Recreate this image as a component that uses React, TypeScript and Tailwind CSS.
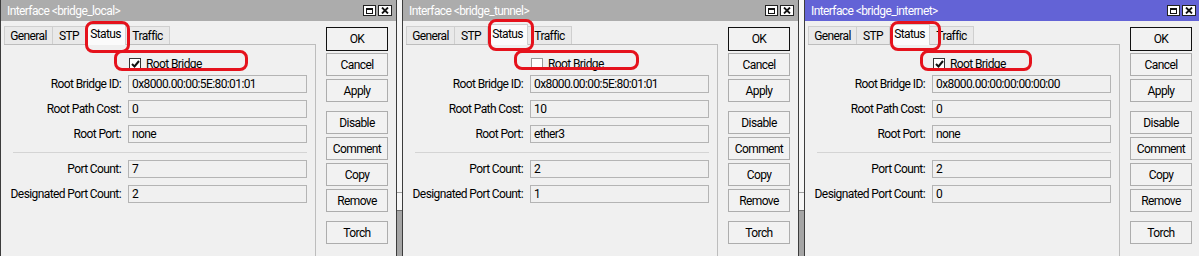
import React from 'react';

type Win = {
  name: string;
  active: boolean;
  rootBridge: boolean;
  rootId: string;
  pathCost: string;
  rootPort: string;
  portCount: string;
  designated: string;
  statusMark: string;
  bridgeMark: string;
};

const windows: Win[] = [
  {
    name: 'bridge_local',
    active: false,
    rootBridge: true,
    rootId: '0x8000.00:00:5E:80:01:01',
    pathCost: '0',
    rootPort: 'none',
    portCount: '7',
    designated: '2',
    statusMark: 'left-[84px] top-[21px] w-[45px] h-[32px]',
    bridgeMark: 'left-[113px] top-[50px] w-[134px] h-[21px]',
  },
  {
    name: 'bridge_tunnel',
    active: false,
    rootBridge: false,
    rootId: '0x8000.00:00:5E:80:01:01',
    pathCost: '10',
    rootPort: 'ether3',
    portCount: '2',
    designated: '1',
    statusMark: 'left-[85px] top-[19px] w-[46px] h-[32px]',
    bridgeMark: 'left-[111px] top-[50px] w-[125px] h-[20px]',
  },
  {
    name: 'bridge_internet',
    active: true,
    rootBridge: true,
    rootId: '0x8000.00:00:00:00:00:00',
    pathCost: '0',
    rootPort: 'none',
    portCount: '2',
    designated: '0',
    statusMark: 'left-[85px] top-[21px] w-[51px] h-[30px]',
    bridgeMark: 'left-[115px] top-[50px] w-[112px] h-[21px]',
  },
];

const Field = ({ label, value }: { label: string; value: string }) => (
  <div className="flex items-center h-[18px]">
    <div className="w-[117px] text-right whitespace-nowrap">{label}</div>
    <div className="ml-[7px] w-[179px] h-[18px] border border-[#b4b4b4] bg-[#f0f0f0] pl-[3px] leading-[16px]">
      {value}
    </div>
  </div>
);

const Btn = ({ label, cls }: { label: string; cls: string }) => (
  <div className={`h-[23px] flex items-center justify-center border border-[#adadad] bg-[#f2f2f2] ${cls}`}>
    {label}
  </div>
);

const Window = ({ w }: { w: Win }) => (
  <div className="relative w-[397px] h-[256px] shrink-0 flex flex-col border-x border-[#3c3c3c] bg-[#f0f0f0]">
    {/* title bar */}
    <div className={`h-[21px] flex items-center pl-[6px] pr-[4px] text-white ${w.active ? 'bg-[#6363d6]' : 'bg-[#acacac]'}`}>
      <span>Interface &lt;{w.name}&gt;</span>
      <div className="ml-auto flex gap-[2px]">
        <div className="w-[13px] h-[11px] bg-white border border-[#222] flex items-center justify-center">
          <div className="w-[7px] h-[6px] border border-[#111] border-t-2" />
        </div>
        <div className="w-[14px] h-[11px] bg-white border border-[#222] flex items-center justify-center">
          <svg width="8" height="7" viewBox="0 0 8 7">
            <path d="M1 0.5 L7 6.5 M7 0.5 L1 6.5" stroke="#111" strokeWidth="1.8" />
          </svg>
        </div>
      </div>
    </div>

    <div className="flex flex-1">
      {/* tabs + panel */}
      <div className="flex flex-col pl-[3px]">
        <div className="h-[23px] flex items-end">
          <div className="w-[49px] h-[18px] border border-b-0 border-[#cfcfcf] bg-[#e9e9e9] flex items-center justify-center">General</div>
          <div className="w-[33px] h-[18px] border border-b-0 border-l-0 border-[#cfcfcf] bg-[#e9e9e9] flex items-center justify-center">STP</div>
          <div className="w-[40px] h-[21px] -mb-px border border-b-0 border-l-0 border-[#cfcfcf] bg-[#fbfbfb] flex items-start justify-center pt-[3px] z-10">Status</div>
          <div className="w-[44px] h-[18px] border border-b-0 border-l-0 border-[#cfcfcf] bg-[#e9e9e9] flex items-center justify-center">Traffic</div>
        </div>
        <div className="w-[312px] flex-1 border-t border-r border-[#bdbdbd] pt-[12px]">
          <div className="h-[13px] flex items-center pl-[125px]">
            <div className={`w-[12px] h-[12px] border bg-white flex items-center justify-center ${w.rootBridge ? 'border-[#333]' : 'border-[#9a9a9a]'}`}>
              {w.rootBridge && (
                <svg width="9" height="8" viewBox="0 0 9 8">
                  <path d="M1 4 L3.5 6.5 L8 1" stroke="#111" strokeWidth="2" fill="none" />
                </svg>
              )}
            </div>
            <span className="ml-[5px]">Root Bridge</span>
          </div>
          <div className="mt-[5px] flex flex-col gap-[7px]">
            <Field label="Root Bridge ID:" value={w.rootId} />
            <Field label="Root Path Cost:" value={w.pathCost} />
            <Field label="Root Port:" value={w.rootPort} />
          </div>
          <div className="mt-[9px] ml-[9px] w-[294px] h-px bg-[#d4d4d4]" />
          <div className="mt-[7px] flex flex-col gap-[7px]">
            <Field label="Port Count:" value={w.portCount} />
            <Field label="Designated Port Count:" value={w.designated} />
          </div>
        </div>
      </div>

      {/* buttons */}
      <div className="ml-[10px] pt-[6px] w-[62px] flex flex-col">
        <div className="h-[24px] flex items-center justify-center border border-[#111] bg-[#f2f2f2]">OK</div>
        <Btn label="Cancel" cls="mt-[2px]" />
        <Btn label="Apply" cls="mt-[3px]" />
        <Btn label="Disable" cls="mt-[9px]" />
        <Btn label="Comment" cls="mt-[3px]" />
        <Btn label="Copy" cls="mt-[3px]" />
        <Btn label="Remove" cls="mt-[3px]" />
        <Btn label="Torch" cls="mt-[9px]" />
      </div>
    </div>

    {/* red annotations */}
    <div className={`absolute rounded-[8px] border-[3px] border-[#e5121c] pointer-events-none z-20 ${w.statusMark}`} />
    <div className={`absolute rounded-[8px] border-[3px] border-[#e5121c] pointer-events-none z-20 ${w.bridgeMark}`} />
  </div>
);

const Gap = () => (
  <div className="w-[5px] h-[256px] shrink-0 flex flex-col">
    <div className="h-[192px] bg-[#f6f6f6]" />
    <div className="h-px bg-[#a0a0a0]" />
    <div className="h-[17px] bg-[#f6f6f6]" />
    <div className="h-px bg-[#6d6d6d]" />
    <div className="flex-1 bg-[#a5a5a5]" />
  </div>
);

const App: React.FC = () => {
  return (
    <div
      className="w-[1199px] h-[256px] overflow-hidden flex bg-[#f0f0f0] text-[12px] tracking-[-0.6px] text-black leading-none"
      style={{ fontFamily: 'Roboto, "Liberation Sans", Arial, sans-serif' }}
    >
      <Window w={windows[0]} />
      <Gap />
      <Window w={windows[1]} />
      <Gap />
      <Window w={windows[2]} />
    </div>
  );
};

export default App;
